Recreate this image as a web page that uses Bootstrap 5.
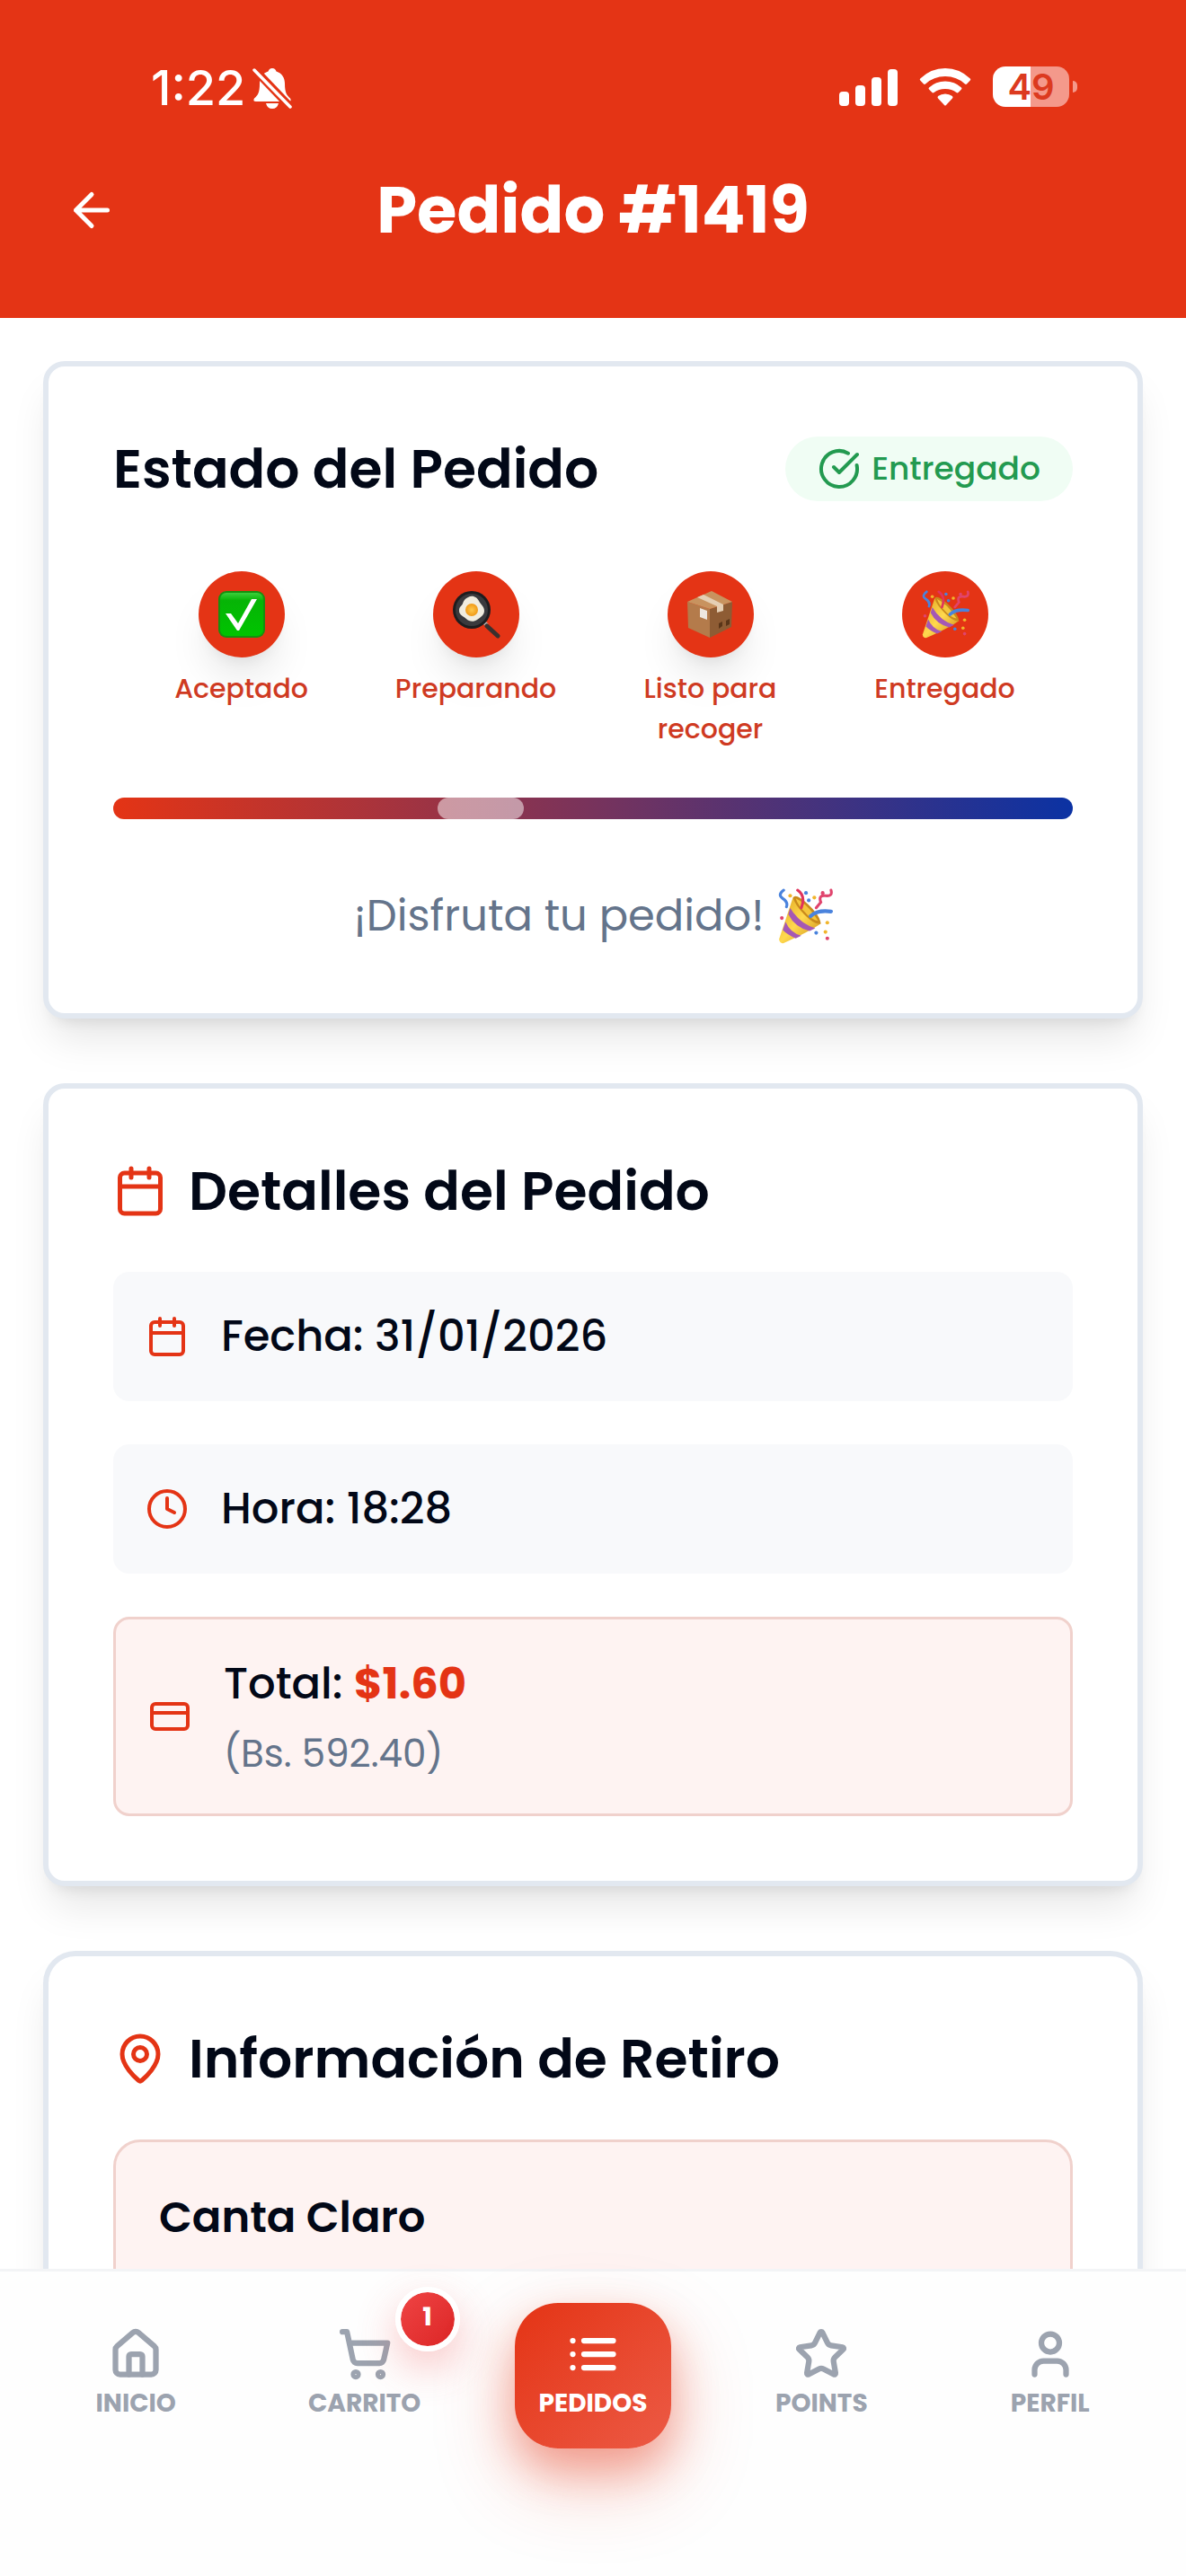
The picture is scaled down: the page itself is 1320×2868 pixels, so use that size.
<!DOCTYPE html>
<html lang="es">
<head>
<meta charset="utf-8">
<meta name="viewport" content="width=device-width, initial-scale=1">
<title>Pedido #1419</title>
<link href="https://cdn.jsdelivr.net/npm/bootstrap@5.3.0/dist/css/bootstrap.min.css" rel="stylesheet">
<style>
:root { --brand: #e43415; --ink: #020817; --muted: #64748b; --line: #e2e8f0; --gray: #9ca3af; }
body { font-family: Poppins, Inter, "Open Sans", sans-serif; color: var(--ink); background: #fff; }
svg { display: block; flex-shrink: 0; }
.ico { fill: none; stroke: currentColor; stroke-width: 2; stroke-linecap: round; stroke-linejoin: round; }
.ico-lg { width: 60px; height: 60px; }
.ico-md { width: 48px; height: 48px; }
.brand-ink { color: var(--brand); }

.app-header { background: var(--brand); color: #fff; padding-bottom: 66px; }
.status-bar { height: 180px; padding: 74px 130px 0 168px; font-family: Inter, "Liberation Sans", sans-serif; }
.clock { font-size: 54px; line-height: 48px; font-weight: 500; }
.battery { position: relative; width: 85px; height: 45px; border-radius: 14px; background: linear-gradient(90deg, #fff 49%, #f4998b 49%); font-size: 40px; line-height: 45px; font-weight: 600; color: #dc3a1f; }
.battery::after { content: ""; position: absolute; right: -9px; top: 16px; width: 5px; height: 13px; border-radius: 0 5px 5px 0; background: #f4998b; }
.title-row { display: grid; grid-template-columns: 108px 1fr 108px; padding: 0 48px; align-items: center; }
.back-btn { width: 108px; height: 108px; padding: 0; color: #fff; border: 0; }
.page-title { font-size: 72px; line-height: 108px; font-weight: 700; }

main { min-height: 0; padding: 48px; scrollbar-width: none; }
.panel { border: 6px solid var(--line); border-radius: 24px; padding: 72px; margin-bottom: 72px; background: #fff; box-shadow: 0 30px 45px -9px rgba(0,0,0,.1), 0 12px 18px -12px rgba(0,0,0,.12); }
.panel-round { border-radius: 36px; }
.panel-title { font-size: 60px; line-height: 84px; font-weight: 600; }
.status-pill { height: 72px; padding: 0 36px; gap: 12px; border-radius: 36px; background: #f0fdf4; color: #239a50; font-size: 36px; font-weight: 500; }
.steps { margin-top: 72px; padding: 0 12px; font-size: 30px; line-height: 45px; font-weight: 500; color: #cf3a22; }
.step-dot { width: 96px; height: 96px; margin-bottom: 12px; border-radius: 50%; background: var(--brand); box-shadow: 0 30px 45px -9px rgba(0,0,0,.1), 0 12px 18px -12px rgba(0,0,0,.1); }
.step-now { box-shadow: none; }
.step-label { width: 192px; }
.track { height: 24px; margin-top: 54px; border-radius: 12px; background: linear-gradient(90deg, #e43415, #0b32a3); }
.shimmer { width: 96px; height: 24px; border-radius: 12px; background: rgba(255,255,255,.5); }
.cheer { margin-top: 72px; gap: 14px; font-size: 48px; line-height: 72px; color: var(--muted); }

.facts { gap: 48px; margin-top: 48px; font-size: 48px; line-height: 72px; font-weight: 500; }
.fact { gap: 36px; padding: 36px; border-radius: 18px; background: #f8f9fb; }
.tinted { border: 3px solid #f0d1cc; background: #fef3f2; }
.fact .in-bs { margin-top: 12px; font-size: 42px; line-height: 60px; font-weight: 400; color: var(--muted); }
.store { margin-top: 48px; padding: 48px; border-radius: 30px; font-size: 48px; line-height: 72px; font-weight: 600; }

.tab-bar { position: relative; min-height: 342px; border-top: 3px solid #f3f4f6; background: #fefefe; padding: 35px 24px 0; }
.tab-item { position: relative; width: 174px; height: 162px; padding-top: 27px; gap: 7px; border-radius: 48px; color: var(--gray); font-size: 28px; line-height: 36px; font-weight: 700; text-decoration: none; }
.tab-item .ico { stroke-width: 2.5; }
.tab-item.current { color: #fff; background: linear-gradient(135deg, #e43415, #ec5a45); box-shadow: 0 36px 90px rgba(228,52,21,.25), 0 24px 48px rgba(228,52,21,.35); }
.cart-count { position: absolute; top: -18px; left: 121px; width: 72px; height: 72px; border: 6px solid #fff; border-radius: 50%; background: linear-gradient(135deg, #ef4444, #dc2626) padding-box; color: #fff; line-height: 56px; text-align: center; box-shadow: 0 18px 45px rgba(239,68,68,.3); }
</style>
<script src="https://cdn.jsdelivr.net/npm/bootstrap@5.3.0/dist/js/bootstrap.bundle.min.js"></script>
</head>
<body class="vh-100 d-flex flex-column overflow-hidden">

<svg width="0" height="0" class="position-absolute" aria-hidden="true">
  <defs>
    <linearGradient id="gGreen" x1="0" y1="0" x2="0" y2="1"><stop offset="0" stop-color="#3ccf3c"/><stop offset=".18" stop-color="#06b406"/><stop offset="1" stop-color="#00c400"/></linearGradient>
    <linearGradient id="gCone" x1="0" y1="0" x2="1" y2="1"><stop offset="0" stop-color="#e0a520"/><stop offset=".5" stop-color="#ffd94e"/><stop offset="1" stop-color="#c98712"/></linearGradient>
    <radialGradient id="gYolk"><stop offset="0" stop-color="#ffc94d"/><stop offset="1" stop-color="#f09a16"/></radialGradient>
  </defs>
  <symbol id="calendar" viewBox="0 0 24 24"><path d="M8 2v4M16 2v4M3 10h18"/><rect x="3" y="4" width="18" height="18" rx="2"/></symbol>
  <symbol id="party" viewBox="0 0 60 60">
    <path d="M17 10 47 38Q36 46 7 59Q3 60 2 55Z" fill="url(#gCone)"/>
    <path d="M14 21Q24 38 41 43L35 46Q19 42 12 28ZM9 36Q14 48 26 51L20 54Q11 50 6 45Z" fill="#a558b5"/>
    <path d="M17 10Q20 5 33 17T47 38Q41 40 30 29Q19 18 17 10Z" fill="#c98a1c"/>
    <path d="M20 11Q33 17 44 35Q37 34 30 26Q22 18 20 11Z" fill="#f4c53c"/>
    <g fill="none" stroke-width="3" stroke-linecap="round">
      <path d="M7 2Q0 7 6 11T10 20" stroke="#4a83dd"/>
      <path d="M22 2Q31 8 26 21" stroke="#e0345d"/>
      <path d="M58 2Q60 9 52 8T47 15L42 21" stroke="#e0446d"/>
      <path d="M36 30Q43 23 58 25" stroke="#4a83dd" stroke-width="4"/>
    </g>
    <g fill="#f1b52c"><circle cx="14" cy="8" r="2"/><circle cx="54" cy="37" r="2"/><circle cx="52" cy="47" r="2"/><circle cx="40" cy="10" r="2"/></g>
    <g fill="#4a83dd"><circle cx="31" cy="5" r="2"/><circle cx="34" cy="13" r="2"/><circle cx="42" cy="48" r="2"/></g>
    <g fill="#e0446d"><circle cx="49" cy="5" r="2"/><circle cx="54" cy="54" r="2"/><circle cx="5" cy="32" r="2"/></g>
  </symbol>
</svg>

<header class="app-header">
  <div class="status-bar d-flex justify-content-between align-items-start">
    <div class="d-flex align-items-center gap-2">
      <span class="clock">1:22</span>
      <svg width="44" height="46" viewBox="0 0 44 46" fill="#fff" aria-label="Silencio"><path d="M22 1c2.500 0 4 1.500 4.500 3.600C33 6.500 36 12 36 18c0 10 2 13 6 16.500q2 3.500-2 3.500H4q-4 0-2-3.500C6 31 8 28 8 18 8 12 11 6.500 17.500 4.600 18 2.500 19.500 1 22 1ZM15 40h14q-1.500 6-7 6t-7-6Z"/><path d="M2 2 42 44" stroke="#e43415" stroke-width="9"/><path d="M2 3 42 44" stroke="#fff" stroke-width="3.500" stroke-linecap="round"/></svg>
    </div>
    <div class="d-flex align-items-center">
      <svg class="me-4" width="65" height="44" viewBox="0 0 65 44" fill="#fff" aria-label="Cobertura"><rect y="27" width="11" height="16" rx="4"/><rect x="18" y="20" width="11" height="23" rx="4"/><rect x="36" y="11" width="11" height="32" rx="4"/><rect x="54" y="2" width="11" height="41" rx="4"/></svg>
      <svg class="me-4" width="58" height="44" viewBox="0 0 58 44" fill="#fff" aria-label="Wi-Fi"><path d="M1.200 12.500Q13 1 29 1T56.800 12.500Q57.800 13.500 56.800 14.500L53 18.500Q52 19.300 51 18.500Q42 10 29 10T7 18.500Q6 19.300 5 18.500L1.200 14.500Q.2 13.500 1.200 12.500ZM11 22.500Q18.500 15.500 29 15.500T47 22.500Q48 23.500 47 24.500L43.500 28Q42.500 28.800 41.500 28Q36.500 24 29 24T16.500 28Q15.500 28.800 14.500 28L11 24.500Q10 23.500 11 22.500ZM21 32Q24.500 29.500 29 29.500T37 32Q38 33.500 37 34.500L30 42Q29 43 28 42L21 34.500Q20 33.500 21 32Z"/></svg>
      <div class="battery text-center">49</div>
    </div>
  </div>
  <div class="title-row">
    <button type="button" class="btn back-btn d-flex align-items-center justify-content-center" aria-label="Volver">
      <svg class="ico ico-lg" viewBox="0 0 24 24"><path d="M12 19l-7-7 7-7M19 12H5"/></svg>
    </button>
    <h1 class="page-title text-center m-0">Pedido #1419</h1>
  </div>
</header>

<main class="flex-grow-1 overflow-auto">
  <section class="panel">
    <div class="d-flex justify-content-between align-items-center">
      <h2 class="panel-title m-0">Estado del Pedido</h2>
      <span class="status-pill d-flex align-items-center">
        <svg class="ico ico-md" viewBox="0 0 24 24"><path d="M21.800 10A10 10 0 1 1 17 3.335M9 11l3 3L22 4"/></svg>
        Entregado
      </span>
    </div>
    <div class="steps row row-cols-4 g-0 text-center">
      <div class="col d-flex flex-column align-items-center">
        <div class="step-dot d-flex align-items-center justify-content-center">
          <svg width="54" height="54" viewBox="0 0 54 54"><rect x="1" y="1" width="52" height="52" rx="9" fill="#16900f"/><rect x="3" y="3" width="48" height="48" rx="7" fill="url(#gGreen)"/><path d="M9 26h6l8 11L38 10h6L24 45h-2Z" fill="#fff"/></svg>
        </div>
        <span class="step-label">Aceptado</span>
      </div>
      <div class="col d-flex flex-column align-items-center">
        <div class="step-dot d-flex align-items-center justify-content-center">
          <svg width="54" height="54" viewBox="0 0 54 54"><path d="M35 35 39 39" stroke="#b8b1ad" stroke-width="4"/><path d="M39 40 51 51" stroke="#3a302e" stroke-width="5" stroke-linecap="round"/><circle cx="22" cy="22" r="21" fill="#1d1d1f"/><circle cx="22" cy="22" r="18" fill="#3a3a3d"/><path d="M18 8c5-3 10 0 12 4s6 6 6 11-4 7-8 10-9 2-12-1-8-4-8-9 3-5 4-8 2-5 6-7Z" fill="#f1eddf"/><circle cx="22" cy="22" r="7" fill="url(#gYolk)"/></svg>
        </div>
        <span class="step-label">Preparando</span>
      </div>
      <div class="col d-flex flex-column align-items-center">
        <div class="step-dot d-flex align-items-center justify-content-center">
          <svg width="54" height="54" viewBox="0 0 54 54"><path d="M1 13 26 21V53L2 42Z" fill="#b47b4b"/><path d="M26 21 51 13 50 41 26 53Z" fill="#8e5c34"/><path d="M1 13 28 1 51 13 26 21Z" fill="#c8935f"/><path d="M12 8 19 5 41 16 41 23 34 25 34 18Z" fill="#e5cfb4"/><path d="M15 20 23 23V33L15 30Z" fill="#eee7df"/><path d="M36 37l4-2v5l-4 3ZM44 34l4-2v6l-4 2Z" fill="#5a3518"/></svg>
        </div>
        <span class="step-label">Listo para recoger</span>
      </div>
      <div class="col d-flex flex-column align-items-center">
        <div class="step-dot step-now d-flex align-items-center justify-content-center">
          <svg width="54" height="54"><use href="#party"/></svg>
        </div>
        <span class="step-label">Entregado</span>
      </div>
    </div>
    <div class="track d-flex" role="progressbar" aria-label="Progreso del pedido" aria-valuenow="100" aria-valuemin="0" aria-valuemax="100">
      <div class="shimmer" style="margin-left:33.8%"></div>
    </div>
    <p class="cheer d-flex justify-content-center align-items-center mb-0">¡Disfruta tu pedido! <svg width="62" height="62"><use href="#party"/></svg></p>
  </section>

  <section class="panel">
    <h2 class="panel-title d-flex align-items-center gap-4 m-0"><svg class="ico ico-lg brand-ink" viewBox="0 0 24 24"><use href="#calendar"/></svg>Detalles del Pedido</h2>
    <div class="facts d-flex flex-column">
      <div class="fact d-flex align-items-center"><svg class="ico ico-md brand-ink" viewBox="0 0 24 24"><use href="#calendar"/></svg><span>Fecha: 31/01/2026</span></div>
      <div class="fact d-flex align-items-center"><svg class="ico ico-md brand-ink" viewBox="0 0 24 24"><circle cx="12" cy="12" r="10"/><path d="M12 6v6l4 2"/></svg><span>Hora: 18:28</span></div>
      <div class="fact tinted d-flex align-items-center">
        <svg class="ico ico-md brand-ink" viewBox="0 0 24 24"><rect x="2" y="5" width="20" height="14" rx="2"/><path d="M2 10h20"/></svg>
        <div>
          <div>Total: <strong class="brand-ink fw-bold">$1.60</strong></div>
          <div class="in-bs">(Bs. 592.40)</div>
        </div>
      </div>
    </div>
  </section>

  <section class="panel panel-round">
    <h2 class="panel-title d-flex align-items-center gap-4 m-0"><svg class="ico ico-lg brand-ink" viewBox="0 0 24 24"><path d="M20 10c0 5-5.500 10.200-7.400 11.800a1 1 0 0 1-1.200 0C9.500 20.200 4 15 4 10a8 8 0 0 1 16 0"/><circle cx="12" cy="10" r="3"/></svg>Información de Retiro</h2>
    <div class="store tinted">Canta Claro</div>
  </section>
</main>

<nav class="tab-bar" aria-label="Principal">
  <div class="row row-cols-5 g-0">
    <div class="col d-flex justify-content-center">
      <a href="#inicio" class="tab-item d-flex flex-column align-items-center"><svg class="ico ico-lg" viewBox="0 0 24 24"><path d="M15 21v-8a1 1 0 0 0-1-1h-4a1 1 0 0 0-1 1v8"/><path d="M3 10a2 2 0 0 1 .709-1.528l7-6a2 2 0 0 1 2.582 0l7 6A2 2 0 0 1 21 10v9a2 2 0 0 1-2 2H5a2 2 0 0 1-2-2z"/></svg>INICIO</a>
    </div>
    <div class="col d-flex justify-content-center">
      <a href="#carrito" class="tab-item d-flex flex-column align-items-center"><svg class="ico ico-lg" viewBox="0 0 24 24"><circle cx="8" cy="21" r="1"/><circle cx="19" cy="21" r="1"/><path d="M2.050 2.050h2l2.660 12.420a2 2 0 0 0 2 1.580h9.780a2 2 0 0 0 1.950-1.570l1.650-7.430H5.120"/></svg>CARRITO<span class="cart-count">1</span></a>
    </div>
    <div class="col d-flex justify-content-center">
      <a href="#pedidos" class="tab-item current d-flex flex-column align-items-center" aria-current="page"><svg class="ico ico-lg" viewBox="0 0 24 24"><path d="M3 6h.01M3 12h.01M3 18h.01M8 6h13M8 12h13M8 18h13"/></svg>PEDIDOS</a>
    </div>
    <div class="col d-flex justify-content-center">
      <a href="#points" class="tab-item d-flex flex-column align-items-center"><svg class="ico ico-lg" viewBox="0 0 24 24"><path d="M11.525 2.295a.53.53 0 0 1 .95 0l2.310 4.679a2.123 2.123 0 0 0 1.595 1.160l5.166.756a.53.53 0 0 1 .294.904l-3.736 3.638a2.123 2.123 0 0 0-.611 1.878l.882 5.140a.53.53 0 0 1-.771.560l-4.618-2.428a2.122 2.122 0 0 0-1.973 0L6.396 21.010a.53.53 0 0 1-.770-.560l.881-5.139a2.122 2.122 0 0 0-.611-1.879L2.160 9.795a.53.53 0 0 1 .294-.906l5.165-.755a2.122 2.122 0 0 0 1.597-1.160z"/></svg>POINTS</a>
    </div>
    <div class="col d-flex justify-content-center">
      <a href="#perfil" class="tab-item d-flex flex-column align-items-center"><svg class="ico ico-lg" viewBox="0 0 24 24"><path d="M19 21v-2a4 4 0 0 0-4-4H9a4 4 0 0 0-4 4v2"/><circle cx="12" cy="7" r="4"/></svg>PERFIL</a>
    </div>
  </div>
</nav>
</body>
</html>
